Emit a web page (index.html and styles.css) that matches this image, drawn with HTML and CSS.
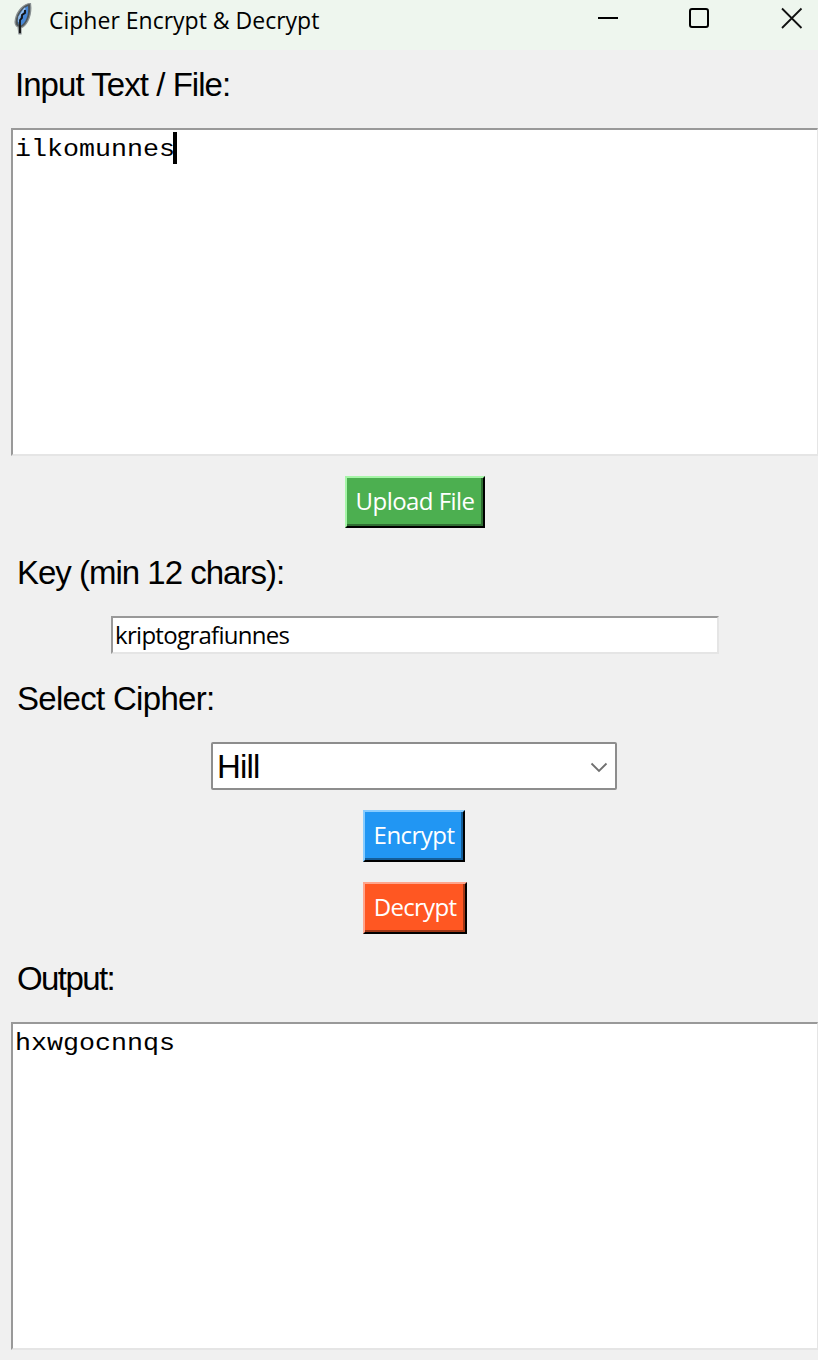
FILE: index.html
```html
<!DOCTYPE html>
<html lang="en">
<head>
<meta charset="utf-8">
<title>Cipher Encrypt &amp; Decrypt</title>
<link rel="stylesheet" href="styles.css">
</head>
<body>
<div class="window">
  <header class="titlebar">
    <svg class="feather" width="22" height="34" viewBox="0 0 22 34">
      <path d="M17.500 2.500C11 2.500 4 10 2.500 18C1.500 22 2.500 25 5 26L6 33H8L8 27C15 24 19 13 17.500 2.500Z" fill="#4d5558" stroke="#899092" stroke-width="1.200"/>
      <path d="M15 5C10 7 5.500 12 4.500 20L6 24L8 24.500C13 22 16 13 15 5Z" fill="#4787d4"/>
      <path d="M12 7L6 16V21" stroke="#9cc0e6" stroke-width="1.500" fill="none"/>
      <path d="M12 9V12L9 14V17L7 19V32" stroke="#111" stroke-width="1.800" fill="none"/>
    </svg>
    <h1 class="title"><span class="title-text">Cipher Encrypt &amp; Decrypt</span></h1>
    <svg class="controls" width="221" height="24" viewBox="0 0 221 24" fill="none" stroke="#000" stroke-width="2">
      <path d="M1 12H21"/>
      <rect x="93" y="3" width="18" height="18" rx="2"/>
      <path d="M185 2.500L204.500 22M204.500 2.500L185 22" stroke="#111" stroke-width="1.800"/>
    </svg>
  </header>
  <main class="form">
    <div class="label label-input"><span>Input Text / File:</span></div>
    <div class="textbox"><span class="mono">ilkomunnes</span><i class="caret"></i></div>
    <div class="button upload"><span>Upload File</span></div>
    <div class="label label-key"><span>Key (min 12 chars):</span></div>
    <div class="entry"><span>kriptografiunnes</span></div>
    <div class="label label-select"><span>Select Cipher:</span></div>
    <div class="combo"><span>Hill</span>
      <svg class="chevron" width="18" height="12" viewBox="0 0 18 12" fill="none" stroke="#707070" stroke-width="1.800"><path d="M1.500 1.500L9 9L16.500 1.500"/></svg>
    </div>
    <div class="button encrypt"><span>Encrypt</span></div>
    <div class="button decrypt"><span>Decrypt</span></div>
    <div class="label label-output"><span>Output:</span></div>
    <div class="textbox output"><span class="mono">hxwgocnnqs</span></div>
  </main>
</div>
</body>
</html>
```
FILE: styles.css
```css
* { box-sizing: border-box; }
body { margin: 0; background: #f0f0f0; color: #000; }
.window { width: 818px; height: 1360px; overflow: hidden; }
.titlebar { height: 50px; display: flex; align-items: flex-start; padding: 0 0 0 13px; background: #eef6ee; }
.feather { flex: none; margin-top: 1px; }
.title { flex: 1; margin: 3px 0 0 14px; font: 400 23px/34px "Open Sans", sans-serif; white-space: nowrap; }
.controls { flex: none; margin-top: 6px; }
.form { display: flex; flex-direction: column; align-items: flex-start; }
.label { height: 40px; font: 33px/40px "Liberation Sans", Arial, sans-serif; white-space: nowrap; }
.label-input { margin: 15px 0 23px 15px; letter-spacing: -0.95px; }
.label-key { margin: 25px 0 23px 17px; letter-spacing: -1px; }
.label-select { margin: 25px 0 23px 17px; letter-spacing: -0.7px; }
.label-output { margin: 25px 0 23px 17px; letter-spacing: -1.6px; }
.textbox { width: 807px; height: 328px; margin-left: 11px; display: flex; align-items: flex-start; background: #fff; border: 2px solid; border-color: #999 #e5e5e5 #e5e5e5 #999; border-right-width: 1px; padding: 2px 0 0 2px; }
.mono { font: 26.67px/32px "Liberation Mono", "Courier New", monospace; transform: scaleY(0.87); transform-origin: 0 27px; }
.caret { width: 4px; height: 32px; margin-left: -2px; background: #000; }
.button { height: 52px; color: #fff; font: 24px/46px "Open Sans", sans-serif; text-align: center; white-space: nowrap; border: 2px solid; }
.upload { width: 140px; margin: 20px 0 0 345px; letter-spacing: -0.55px; background: #4caf50; border-color: #a6f5a8 #000 #000 #a6f5a8; box-shadow: inset -2px -2px #2f6d32; }
.encrypt { width: 102px; margin: 20px 0 0 363px; letter-spacing: -0.55px; background: #2196f3; border-color: #88ccff #000 #000 #88ccff; box-shadow: inset -2px -2px #145d98; }
.decrypt { width: 104px; margin: 20px 0 0 363px; letter-spacing: -0.7px; background: #ff5722; border-color: #ffa58c #000 #000 #ffa58c; box-shadow: inset -2px -2px #9f3615; }
.entry { width: 608px; height: 38px; margin-left: 111px; padding-left: 2px; background: #fff; border: 2px solid; border-color: #999 #e5e5e5 #e5e5e5 #999; font: 24px/34px "Open Sans", sans-serif; letter-spacing: -0.7px; }
.combo { width: 406px; height: 48px; margin-left: 211px; padding: 1px 7px 0 4px; display: flex; align-items: center; justify-content: space-between; background: #fff; border: 2px solid #8d8d8d; border-radius: 2px; font: 33px/44px "Liberation Sans", Arial, sans-serif; letter-spacing: -0.8px; }
.chevron { margin-top: 3px; }
```
